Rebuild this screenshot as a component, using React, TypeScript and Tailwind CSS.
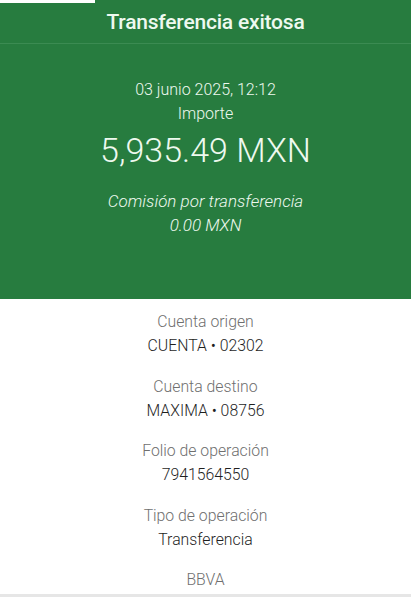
export default function App() {
  const rows = [
    { label: 'Cuenta origen', value: 'CUENTA • 02302' },
    { label: 'Cuenta destino', value: 'MAXIMA • 08756' },
    { label: 'Folio de operación', value: '7941564550' },
    { label: 'Tipo de operación', value: 'Transferencia' },
  ];

  return (
    <div className="relative w-[411px] h-[597px] overflow-hidden bg-white font-['Roboto',sans-serif]">
      {/* recorte blanco de la captura */}
      <div className="absolute left-0 top-0 w-[95px] h-[3px] bg-white" />

      <div className="bg-[#277c3f] text-[#eef9ef]">
        <div className="h-[44px] pt-[2px] flex items-center justify-center border-b border-[#3b8b52]">
          <h1 className="text-[21px] font-medium tracking-[-0.2px]">Transferencia exitosa</h1>
        </div>

        <div className="h-[255px] pt-[34px] flex flex-col items-center text-center">
          <p className="text-[16px] leading-[24px] font-light">03 junio 2025, 12:12</p>
          <p className="text-[16px] leading-[24px] font-light">Importe</p>
          <p className="mt-[4px] text-[34px] leading-[40px] font-light">5,935.49 MXN</p>
          <p className="mt-[19px] text-[17px] leading-[24px] font-light italic">Comisión por transferencia</p>
          <p className="text-[17px] leading-[24px] font-light italic">0.00 MXN</p>
        </div>
      </div>

      <div className="pt-[11px] flex flex-col items-center gap-[16.5px] text-[15.8px] leading-[24px] font-light">
        {rows.map((r) => (
          <div key={r.label} className="flex flex-col items-center">
            <span className="text-[#6f6f6f]">{r.label}</span>
            <span className="text-[#1f1f1f]">{r.value}</span>
          </div>
        ))}
        <span className="text-[#6f6f6f]">BBVA</span>
      </div>

      <div className="absolute left-0 bottom-0 w-full h-[3px] bg-[#e6e6e6]" />
    </div>
  );
}
